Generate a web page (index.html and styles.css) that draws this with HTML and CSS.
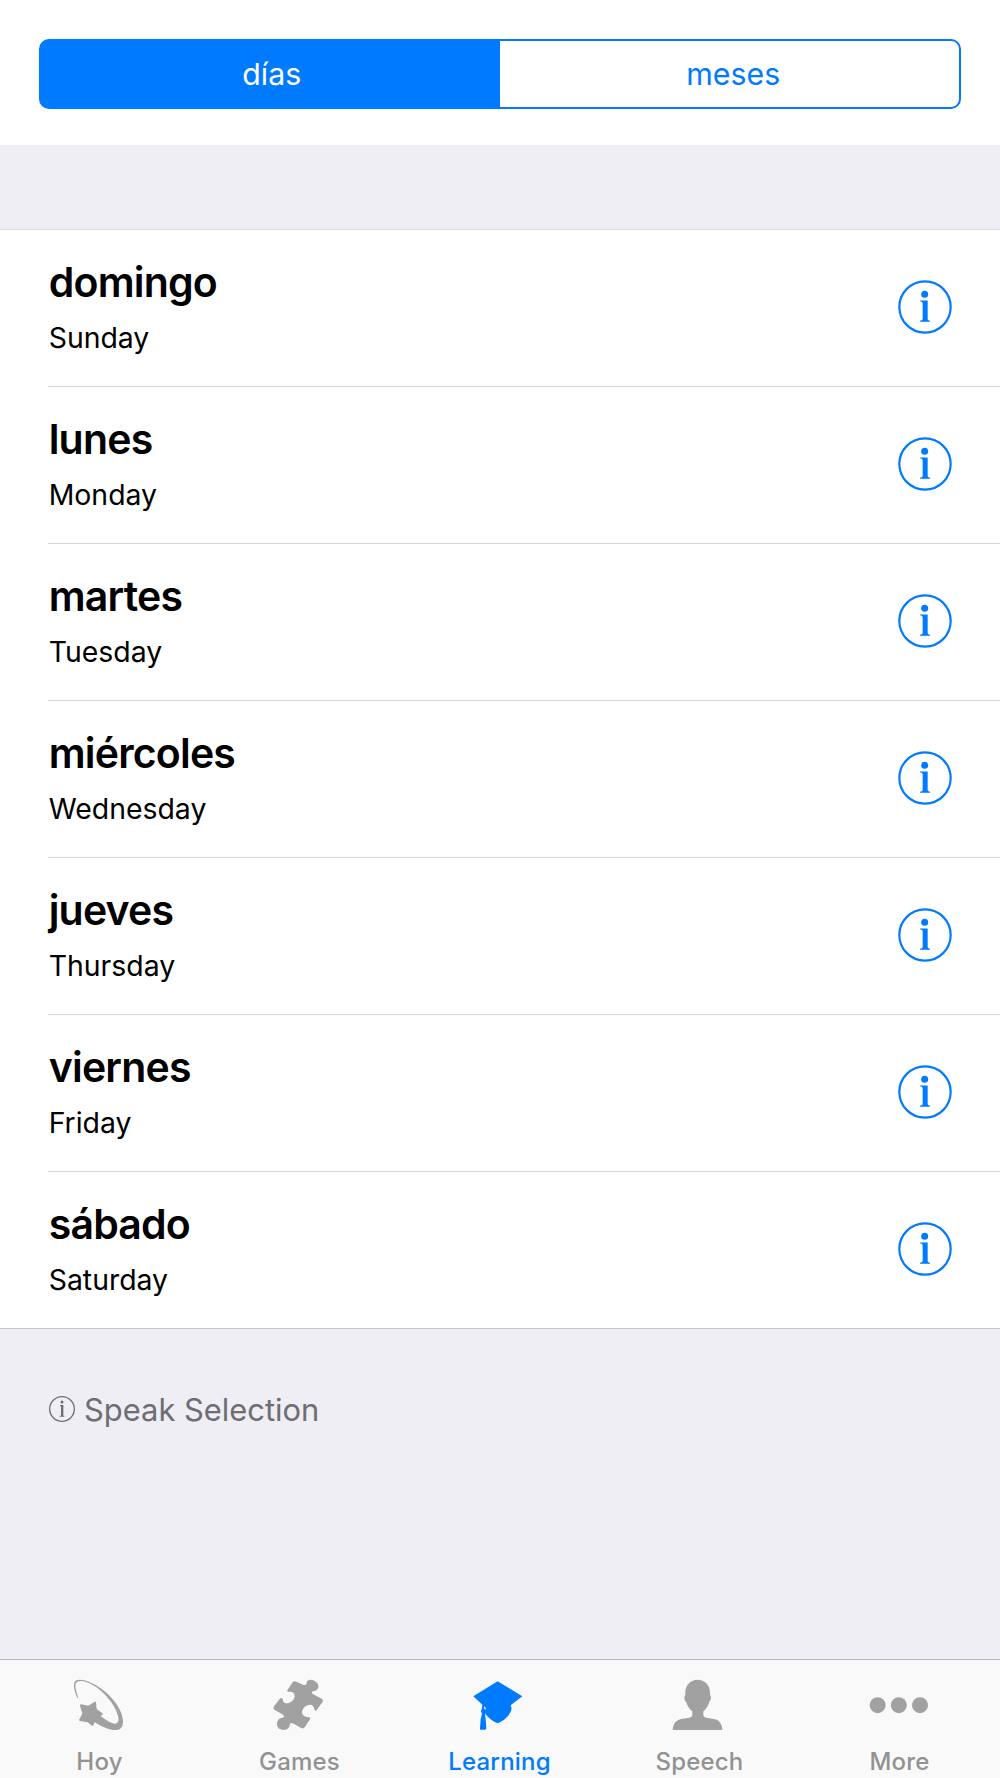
FILE: index.html
```html
<!DOCTYPE html>
<html lang="es">
<head>
    <meta charset="UTF-8">
    <title>Learning</title>
    <link rel="stylesheet" href="styles.css">
</head>
<body>
    <svg class="symbols">
        <symbol id="info" viewBox="0 0 162 162">
            <circle cx="81" cy="81" r="77" fill="none" stroke="currentColor" stroke-width="6.6"/>
            <circle cx="80" cy="43" r="10.500" fill="currentColor"/>
            <path d="M66 61.500 H89 V118 Q90 121.500 96 122 V125 H66 V122 Q73 121.500 74 118 V69 Q73 65 66 64 Z" fill="currentColor"/>
        </symbol>
    </svg>

    <div class="header">
        <div class="segmented">
            <div class="segment active">días</div>
            <div class="segment">meses</div>
        </div>
    </div>

    <div class="list">
        <div class="row">
            <div class="words"><div class="word">domingo</div><div class="translation">Sunday</div></div>
            <svg class="info"><use href="#info"/></svg>
        </div>
        <div class="row">
            <div class="words"><div class="word">lunes</div><div class="translation">Monday</div></div>
            <svg class="info"><use href="#info"/></svg>
        </div>
        <div class="row">
            <div class="words"><div class="word">martes</div><div class="translation">Tuesday</div></div>
            <svg class="info"><use href="#info"/></svg>
        </div>
        <div class="row">
            <div class="words"><div class="word">miércoles</div><div class="translation">Wednesday</div></div>
            <svg class="info"><use href="#info"/></svg>
        </div>
        <div class="row">
            <div class="words"><div class="word">jueves</div><div class="translation">Thursday</div></div>
            <svg class="info"><use href="#info"/></svg>
        </div>
        <div class="row">
            <div class="words"><div class="word">viernes</div><div class="translation">Friday</div></div>
            <svg class="info"><use href="#info"/></svg>
        </div>
        <div class="row">
            <div class="words"><div class="word">sábado</div><div class="translation">Saturday</div></div>
            <svg class="info"><use href="#info"/></svg>
        </div>
    </div>

    <div class="note">
        <svg class="note-icon" viewBox="0 0 78 78">
            <circle cx="39" cy="39" r="37" fill="none" stroke="currentColor" stroke-width="4"/>
            <circle cx="39" cy="18" r="4.500" fill="currentColor"/>
            <path d="M33 27 H43 V59 H46 V62 H32 V59 H36 V30 H33 Z" fill="currentColor"/>
        </svg>
        <span>Speak Selection</span>
    </div>

    <div class="tab-bar">
        <div class="tab">
            <svg viewBox="210 75 180 180">
                <path d="M232 144 C223 124 219 105 224 96 C229 87 246 87 268 96 C319 117 367 170 369 212 C370 235 358 242 338 240 C319 237 300 228 284 217 L280 226 Q277 230 274 226 L263 217 L240 213 Q235 212 238 208 L247 191 L240 167 Q240 162 244 163 L265 167 L284 155 Q288 153 288 158 L290 177 L307 190 Q311 194 306 195 L302 199 C319 211 333 220 343 221 C354 222 358 212 354 198 C345 159 301 112 265 98 C247 91 233 91 228 99 C223 107 229 125 235 144 Z"/>
            </svg>
            <span>Hoy</span>
        </div>
        <div class="tab">
            <svg viewBox="810 75 180 180">
                <path d="M878 97 Q882 92 889 95 L909 104 Q920 108 920 98 C921 89 933 87 944 93 C956 100 959 111 951 119 C946 124 934 122 936 128 Q937 132 944 135 L965 146 Q971 149 968 155 L951 179 Q947 184 943 179 C942 171 939 164 930 164 C917 164 906 176 906 187 C907 199 918 201 927 202 Q932 204 930 208 L914 232 Q909 238 902 233 L883 222 Q870 215 869 224 C869 236 855 243 842 238 C830 233 828 219 835 209 C841 202 854 205 852 199 Q851 195 845 191 L824 180 Q818 176 821 170 L839 147 Q844 141 848 147 C849 154 851 160 859 160 C872 160 884 149 884 138 C884 127 875 124 865 126 Q860 125 862 121 Z"/>
            </svg>
            <span>Games</span>
        </div>
        <div class="tab active">
            <svg viewBox="420 75 180 180">
                <path d="M430 139 L503 94 L577 139 L542 166 C546 174 545 180 541 187 C534 202 518 214 503 220 C489 214 477 205 468 194 L467 188 C465 194 465 200 467 207 L469 235 Q469 239 465 239 H453 Q449 239 450 235 L452 207 C454 199 456 194 455 188 C452 185 452 181 455 179 L457 164 Z"/>
                <path class="gap" d="M462 169 L467 173 V179 L463 177 Z"/>
            </svg>
            <span>Learning</span>
        </div>
        <div class="tab">
            <svg viewBox="30 75 180 180">
                <path d="M113 89 C137 90 150 107 150 128 V136 C155 140 153 152 148 155 C145 167 138 177 130 184 V194 C130 204 143 204 158 206 C176 208 187 220 187 240 H38 C39 220 49 209 67 206 C83 204 97 204 97 194 V184 C88 177 82 167 78 155 C73 152 71 140 76 136 V128 C76 106 90 90 113 89 Z"/>
            </svg>
            <span>Speech</span>
        </div>
        <div class="tab">
            <svg viewBox="630 75 180 180">
                <circle cx="653" cy="165.500" r="24"/>
                <circle cx="716.500" cy="165.500" r="24"/>
                <circle cx="780" cy="165.500" r="24"/>
            </svg>
            <span>More</span>
        </div>
    </div>
</body>
</html>
```
FILE: styles.css
```css
* {
    box-sizing: border-box;
}
body {
    margin: 0;
    height: 1778px;
    display: flex;
    flex-direction: column;
    font-family: Inter, "Liberation Sans", sans-serif;
    background: #efeef4;
    color: #000;
    overflow: hidden;
}
.symbols {
    display: none;
}
.header {
    height: 145px;
    padding: 39px 39px 0;
    background: #fff;
}
.segmented {
    display: flex;
    height: 70px;
    border: 2px solid #007aff;
    border-radius: 10px;
    background: linear-gradient(90deg, #007aff 50%, #fff 50%) border-box;
}
.segment {
    flex: 1;
    padding-left: 10px;
    line-height: 66px;
    text-align: center;
    font-size: 30.3px;
    color: #007aff;
}
.segment.active {
    padding-left: 5px;
    color: #fff;
}
.list {
    margin-top: 84px;
    padding-left: 48px;
    background: #fff;
    border-top: 1px solid #dbdadf;
    border-bottom: 1px solid #c8c7cc;
}
.row {
    height: 157px;
    padding-right: 48px;
    display: flex;
    justify-content: space-between;
    border-bottom: 1px solid #d6d5d9;
}
.row:last-child {
    height: 156px;
    border-bottom: none;
}
.words {
    padding-top: 27px;
}
.word {
    padding-left: 0.7px;
    line-height: 50px;
    font-size: 41px;
    font-weight: 600;
    letter-spacing: -0.8px;
}
.translation {
    margin-top: 5px;
    padding-left: 0.7px;
    line-height: 51px;
    font-size: 28.4px;
}
.info {
    width: 54px;
    height: 54px;
    margin-top: 50px;
    color: #007aff;
}
.note {
    display: flex;
    align-items: center;
    gap: 9px;
    margin: 55px 0 0 49px;
    height: 50px;
    font-size: 30.9px;
    color: #6d6d72;
}
.note-icon {
    width: 26px;
    height: 26px;
}
.tab-bar {
    display: flex;
    height: 119px;
    margin-top: auto;
    background: #f9f9f9;
    border-top: 1px solid #b5b5b8;
}
.tab {
    flex: 1;
    display: flex;
    flex-direction: column;
    align-items: center;
    padding-top: 15px;
    font-size: 24px;
    font-weight: 450;
    letter-spacing: 0.2px;
    color: #929292;
}
.tab svg {
    width: 60px;
    height: 60px;
    fill: #a1a1a1;
    overflow: visible;
}
.tab span {
    margin-top: 12px;
    padding-right: 1px;
    line-height: 30px;
}
.tab.active {
    color: #007aff;
}
.tab.active svg {
    fill: #007aff;
}
.tab .gap {
    fill: #f9f9f9;
}
```
